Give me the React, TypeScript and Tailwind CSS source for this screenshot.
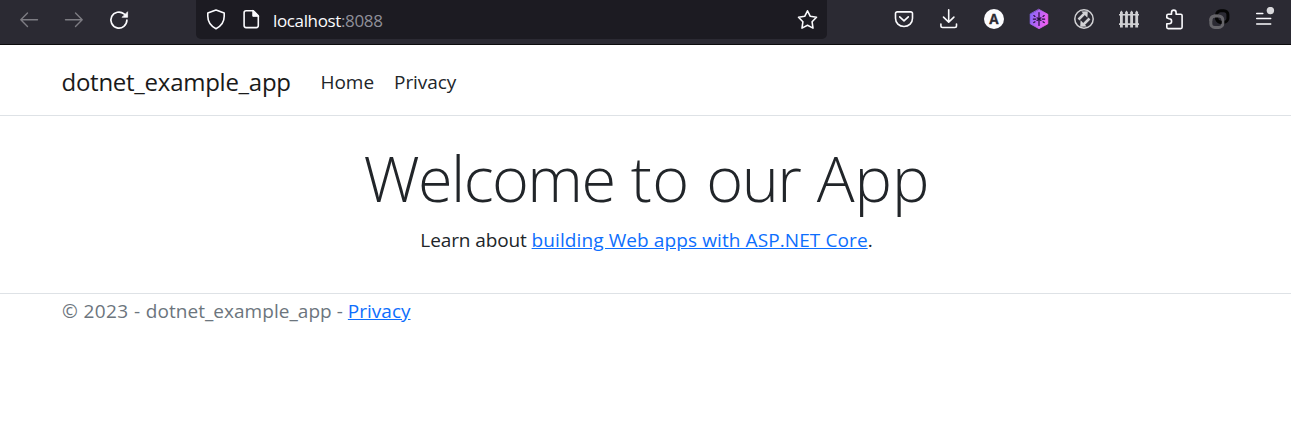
import type { ReactNode } from "react";

function Icon({ children }: { children: ReactNode }) {
  return (
    <svg
      width="25"
      height="25"
      viewBox="0 0 25 25"
      fill="none"
      stroke="#fbfbfe"
      strokeWidth="1.6"
      strokeLinecap="round"
      strokeLinejoin="round"
      className="block shrink-0"
    >
      {children}
    </svg>
  );
}

function Navigation() {
  return (
    <div className="flex w-[180px] gap-5 pl-4">
      <Icon>
        <path d="M21.5 12.7H4.8M11.5 6L4.8 12.7l6.7 6.7" stroke="#7d7c83" strokeWidth="1.4" />
      </Icon>
      <Icon>
        <path d="M4.5 12.7h16.7M14.5 6l6.7 6.7-6.7 6.7" stroke="#7d7c83" strokeWidth="1.4" />
      </Icon>
      <Icon>
        <path d="M20.9 13.1a8 8 0 1 1-2.9-6.2l1.7 1.6" strokeWidth="1.7" />
        <path d="M21.6 5.1v5.2h-5.2z" fill="#fbfbfe" strokeWidth="0.7" />
      </Icon>
    </div>
  );
}

function AddressBar() {
  return (
    <div className="flex h-[39px] w-[631px] items-start rounded-b-[5px] bg-[#1c1b22] pt-[7px] pl-[7px]">
      <Icon>
        <path d="M13 3l8.2 3.1v3.2c0 5.3-3 9.8-8.2 12.4-5.2-2.6-8.2-7.1-8.2-12.4V6.1z" />
      </Icon>
      <div className="ml-[10px]">
        <Icon>
          <path d="M8.1 3.8h7.2l5 5v9.8a2 2 0 0 1-2 2H8.1a2 2 0 0 1-2-2V5.8a2 2 0 0 1 2-2z" />
          <path d="M14.8 3.8v5.5h5.5z" fill="#fbfbfe" strokeWidth="1" />
        </Icon>
      </div>
      <span className="ml-[10px] flex-1 font-['Open_Sans','Noto_Sans',sans-serif] text-[17px] leading-[27px] tracking-[-0.36px] text-[#fbfbfe]">
        localhost<span className="text-[#8f8f99]">:8088</span>
      </span>
      <div className="mr-[7px]">
        <Icon>
          <path d="M12.5 3.8l2.8 5.5 6.2 1-4.4 4.5.9 6.3-5.5-2.8-5.5 2.8.9-6.3-4.4-4.5 6.2-1z" />
        </Icon>
      </div>
    </div>
  );
}

function Extensions() {
  return (
    <div className="ml-16 flex gap-5">
      <Icon>
        <path d="M6.2 4.9h13.6a1.7 1.7 0 0 1 1.7 1.7v4.7c0 4.6-3.5 8.2-8.5 8.2s-8.5-3.6-8.5-8.2V6.6a1.7 1.7 0 0 1 1.7-1.7z" />
        <path d="M8.7 9.9l4.3 4 4.3-4" />
      </Icon>
      <Icon>
        <path d="M12.7 2.8v12.3M7.5 10.1l5.2 5 5.2-5M4.9 17v1.8a1.7 1.7 0 0 0 1.7 1.7h12.2a1.7 1.7 0 0 0 1.7-1.7V17" />
      </Icon>
      <Icon>
        <circle cx="13" cy="12" r="10" fill="#fbfbfe" stroke="none" />
        <text
          x="13"
          y="16.7"
          textAnchor="middle"
          fill="#2b2a33"
          stroke="#2b2a33"
          strokeWidth="0.3"
          className="font-['Open_Sans',sans-serif] text-[13.5px] font-bold"
        >
          A
        </text>
      </Icon>
      <Icon>
        <defs>
          <linearGradient id="hex" gradientUnits="userSpaceOnUse" x1="4" y1="9" x2="22" y2="15">
            <stop offset="0" stopColor="#8a66fa" />
            <stop offset="1" stopColor="#f65ff2" />
          </linearGradient>
        </defs>
        <path d="M13 2.4l8.8 4.9v9.5L13 21.7l-8.800-4.900V7.300z" fill="url(#hex)" stroke="url(#hex)" strokeWidth="0.8" />
        <path
          d="M13 5.5v13M7.800 8.600l1.200.8M11 10.800l2 1.300 2-1.300M7.300 12.100h2.500M7.800 15.600l1.200-.8M11 13.400l2-1.300 2 1.300M18.200 8.600l-1.200.8M18.700 12.100h-2.500M18.200 15.600l-1.200-.8"
          stroke="#211238"
          strokeWidth="1.2"
        />
      </Icon>
      <Icon>
        <g stroke="#d2d2d5" strokeLinecap="butt">
          <circle cx="13" cy="12" r="9.2" strokeWidth="1.5" />
          <path d="M7.5 12.500l6.500-6.500M18.500 11.500L12 18" strokeWidth="2.500" />
          <path d="M10.300 4.500l6.500-.3-.4 6.500zM15.700 19.500l-6.500.3.400-6.500z" fill="#d2d2d5" stroke="none" />
        </g>
      </Icon>
      <Icon>
        <path
          d="M4 5.200L5.400 3.600 6.800 5.200V20.500H4zM9.100 5.200l1.400-1.600 1.400 1.600v15.300H9.100zM14.200 5.200l1.400-1.600L17 5.200v15.300h-2.800zM19.300 5.200l1.400-1.600 1.400 1.600v15.300h-2.800zM3 6.900h20v1.600H3zM3 16.200h20v1.700H3z"
          fill="#d0d0d3"
          stroke="none"
        />
      </Icon>
      <Icon>
        <path d="M5.800 10.700V8.500a1.300 1.300 0 0 1 1.300-1.300h3.400V5.400a2.300 2.300 0 0 1 4.600 0v1.800h4.700a1.300 1.300 0 0 1 1.300 1.300v11.800a1.300 1.300 0 0 1-1.300 1.300H7.100a1.300 1.300 0 0 1-1.300-1.300v-3.600h2.300a2.500 2.500 0 0 0 0-5z" />
      </Icon>
      <Icon>
        <g strokeWidth="3" strokeLinecap="butt">
          <rect x="10.700" y="3.700" width="11.200" height="11.500" rx="4" stroke="#050505" />
          <rect x="4.800" y="8.900" width="12" height="11.500" rx="4" stroke="#66656a" />
          <path d="M10.700 7.400v3.800a4 4 0 0 0 4 4h1" stroke="#050505" />
          <path d="M4.800 14v-1.100a4 4 0 0 1 4-4h4" stroke="#66656a" />
        </g>
      </Icon>
      <Icon>
        <path d="M5.700 6.500h6.100M5.700 11.600h14M5.700 17h14" strokeWidth="1.500" />
        <circle cx="19.400" cy="3.600" r="3.700" fill="#d8d8db" stroke="none" />
      </Icon>
    </div>
  );
}

export default function App() {
  return (
    <div className="h-[437px] w-[1291px] overflow-hidden bg-white font-['Open_Sans','Noto_Sans',sans-serif] text-[#212529]">
      <div className="flex h-[45px] items-start border-b border-[#0c0c0d] bg-[#2b2a33]">
        <div className="w-[196px] shrink-0 pt-[7px]">
          <Navigation />
        </div>
        <AddressBar />
        <div className="pt-[7px]">
          <Extensions />
        </div>
      </div>

      <header className="flex h-[71px] items-center border-b border-[#dee2e6] pt-[3px] pl-[61.500px]">
        <a href="#" className="w-[259px] text-[24px] leading-9 tracking-[-0.26px] text-[#1a1a1a]">
          dotnet_example_app
        </a>
        <nav className="flex text-[19px] leading-[30px] tracking-[-0.05px] text-[#212529]">
          <a href="#" className="w-[73.5px]">Home</a>
          <a href="#">Privacy</a>
        </nav>
      </header>

      <main className="h-[177px] pt-[23px] pl-[2px] text-center">
        <h1 className="h-[77px] text-[63px] leading-[77px] font-light">
          <span className="tracking-[-1.6px]">Welcome</span>{" "}
          <span className="tracking-[0.5px]">to</span>{" "}
          <span className="tracking-[-1.5px]">our</span> App
        </h1>
        <p className="mt-[9px] text-[19px] leading-[30px]">
          <span className="tracking-[-0.1px]">Learn about </span>
          <a href="#" className="tracking-[0.1px] text-[#0d6efd] underline">
            building Web apps with ASP.NET Core
          </a>
          .
        </p>
      </main>

      <footer className="border-t border-[#dee2e6] pt-[2px] pl-[62px] text-[19px] leading-[30px] text-[#6c757d]">
        <span className="tracking-[0.4px]">© 2023 - </span>
        <span className="tracking-[0.04px]">dotnet_example_app - </span>
        <a href="#" className="text-[#0d6efd] underline">
          Privacy
        </a>
      </footer>
    </div>
  );
}
